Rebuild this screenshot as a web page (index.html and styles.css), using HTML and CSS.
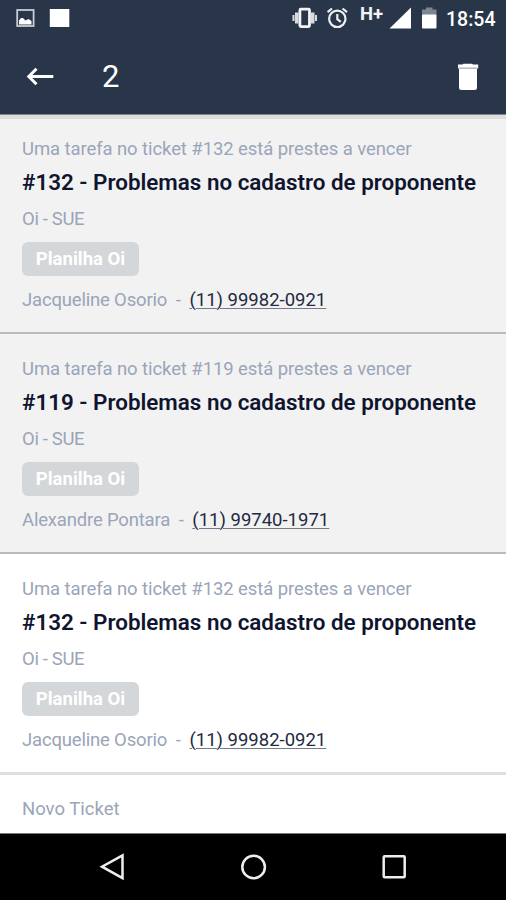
FILE: index.html
```
<!DOCTYPE html>
<html lang="pt-BR">
<head>
<meta charset="UTF-8">
<meta name="viewport" content="width=device-width, initial-scale=1.0">
<title>Notificações</title>
<link rel="stylesheet" href="styles.css">
</head>
<body>

<div class="screen">
  <header class="header">
    <div class="status-bar">
      <svg class="status-left" width="60" height="36" viewBox="0 0 60 36">
        <rect x="5.200" y="10" width="16.400" height="16" fill="none" stroke="#c9ccd2" stroke-width="1.800"/>
        <path d="M7 24.500v-4l2-2.500 2 0 2.500 2.500 3-1.500 3 2v3.500z" fill="#fff"/>
        <rect x="37.800" y="9" width="19.500" height="18" fill="#fff"/>
      </svg>
      <svg class="status-right" width="150" height="36" viewBox="0 0 150 36">
        <g fill="#d9dbe0">
          <rect x="0.500" y="15" width="2" height="6"/>
          <rect x="3" y="12.500" width="3.500" height="11"/>
          <rect x="19" y="12.500" width="3.500" height="11"/>
          <rect x="23" y="15" width="2" height="6"/>
        </g>
        <rect x="7.900" y="9.200" width="9.600" height="17.400" rx="1" fill="none" stroke="#f4f4f6" stroke-width="2.800"/>
        <g fill="none" stroke="#eceef0" stroke-width="2.200">
          <circle cx="45.300" cy="18.800" r="8.200"/>
          <path d="M45.300 14v5.200l3.500 2.600M35.600 12.200l4.400-3.700M55 12.200l-4.400-3.700"/>
        </g>
        <path d="M97.500 28.500h21.500V7.500z" fill="#fff"/>
        <path d="M130 15v-5.500h4v-2h6.500v2h4V15z" fill="#7c8593"/>
        <rect x="130" y="14.500" width="14.500" height="14" rx="1" fill="#fff"/>
        <text class="network" x="68" y="19.800">H+</text>
      </svg>
      <span class="clock">18:54</span>
    </div>
    <div class="toolbar">
      <svg class="back" width="28" height="22" viewBox="0 0 28 22">
        <path d="M27.300 10.500H3M10.500 2.800L2.800 10.500l7.700 7.700" fill="none" stroke="#fff" stroke-width="3"/>
      </svg>
      <span class="count">2</span>
      <svg class="trash" width="22" height="28" viewBox="0 0 22 28">
        <path d="M1 1.500h4.500l1-.8h8.500l1 .8H21.200v4H1z" fill="#fff"/>
        <path d="M1.500 4.500h19v1.200h-19z" fill="#aab1ba"/>
        <path d="M2 5.700h18v18.800q0 2.500-2.500 2.500h-13Q2 27 2 24.500z" fill="#fff"/>
      </svg>
    </div>
  </header>

  <main class="list">
    <div class="card selected">
      <p class="notice">Uma tarefa no ticket #132 está prestes a vencer</p>
      <h2 class="title">#132 - Problemas no cadastro de proponente</h2>
      <p class="company">Oi - SUE</p>
      <span class="tag">Planilha Oi</span>
      <p class="contact"><span class="name">Jacqueline Osorio</span><span class="dash">-</span><a class="phone">(11) 99982-0921</a></p>
    </div>
    <div class="card selected">
      <p class="notice">Uma tarefa no ticket #119 está prestes a vencer</p>
      <h2 class="title">#119 - Problemas no cadastro de proponente</h2>
      <p class="company">Oi - SUE</p>
      <span class="tag">Planilha Oi</span>
      <p class="contact"><span class="name">Alexandre Pontara</span><span class="dash">-</span><a class="phone">(11) 99740-1971</a></p>
    </div>
    <div class="card">
      <p class="notice">Uma tarefa no ticket #132 está prestes a vencer</p>
      <h2 class="title">#132 - Problemas no cadastro de proponente</h2>
      <p class="company">Oi - SUE</p>
      <span class="tag">Planilha Oi</span>
      <p class="contact"><span class="name">Jacqueline Osorio</span><span class="dash">-</span><a class="phone">(11) 99982-0921</a></p>
    </div>
    <div class="card last">
      <p class="notice">Novo Ticket</p>
    </div>
  </main>

  <nav class="nav-bar">
    <svg width="30" height="30" viewBox="0 0 30 30"><path d="M25.500 3.300v22.800L5 14.700z"/></svg>
    <svg width="30" height="30" viewBox="0 0 30 30"><circle cx="15.600" cy="15" r="11.300"/></svg>
    <svg width="30" height="30" viewBox="0 0 30 30"><rect x="4.700" y="4.300" width="21" height="21" rx="1"/></svg>
  </nav>
</div>

</body>
</html>
```
FILE: styles.css
```
body, html {
  margin: 0;
  padding: 0;
  font-family: Roboto, sans-serif;
  background-color: #ffffff;
}
* {
  box-sizing: border-box;
}
.screen {
  display: flex;
  flex-direction: column;
  width: 506px;
  height: 900px;
  overflow: hidden;
}
/* Header */
.header {
  flex: none;
  height: 114px;
  background-color: #29364a;
  color: #ffffff;
}
.status-bar {
  display: flex;
  align-items: center;
  height: 36px;
  padding: 0 10px 0 12px;
}
.status-right {
  margin-left: auto;
}
.network {
  font-size: 18.5px;
  font-weight: bold;
  fill: #f2f3f5;
}
.clock {
  width: 50px;
  margin-left: 4px;
  padding-top: 3px;
  font-size: 19.5px;
  font-weight: 500;
  line-height: 36px;
  white-space: nowrap;
}
.toolbar {
  display: flex;
  align-items: center;
  height: 82px;
  padding: 0 27px 0 26px;
}
.count {
  margin-left: 48px;
  padding-bottom: 2px;
  font-size: 31px;
}
.trash {
  margin-left: auto;
}
/* Notification list */
.list {
  flex: 1;
  overflow: hidden;
  border-top: 1px solid #81868d;
}
.card {
  display: flex;
  flex-direction: column;
  align-items: flex-start;
  height: 220px;
  padding: 23px 22px 0;
  border-bottom: 2px solid #b9bbbc;
}
.card.selected {
  background-color: #f2f2f3;
}
.card.selected:first-child {
  height: 219px;
  border-top: 4px solid #dededd;
  padding-top: 18px;
}
.card:nth-child(3) {
  height: 221px;
  border-bottom: 3px solid #dfdfdf;
}
.card p,
.card h2 {
  margin: 0;
  white-space: nowrap;
}
.card p {
  font-size: 18.5px;
  line-height: 24px;
  letter-spacing: -0.09px;
  color: #9aa5b8;
}
.card .title {
  margin-top: 6px;
  font-size: 22.4px;
  font-weight: 600;
  line-height: 30px;
  color: #10152f;
}
.card .company {
  margin-top: 10px;
  letter-spacing: -0.35px;
}
.tag {
  width: 117px;
  height: 34px;
  margin-top: 11px;
  border-radius: 6px;
  background-color: #d3d7d9;
  color: #ffffff;
  font-size: 18.5px;
  font-weight: bold;
  line-height: 34px;
  text-align: center;
}
.card .contact {
  margin-top: 12px;
}
.name {
  letter-spacing: -0.18px;
}
.dash {
  margin: 0 8.6px;
}
.phone {
  letter-spacing: 0;
  color: #242a3e;
  text-decoration: underline;
  text-decoration-color: #777b88;
  text-decoration-thickness: 1px;
  text-underline-offset: 2px;
}
.card.last {
  padding-top: 22px;
  border-bottom: none;
}
.card.last .notice {
  letter-spacing: 0;
}
/* Android navigation */
.nav-bar {
  flex: none;
  display: flex;
  justify-content: center;
  align-items: center;
  gap: 111px;
  height: 67px;
  border-top: 1px solid #777;
  background-color: #000000;
}
.nav-bar svg {
  fill: none;
  stroke: #eeeeee;
  stroke-width: 2.5;
}
```
